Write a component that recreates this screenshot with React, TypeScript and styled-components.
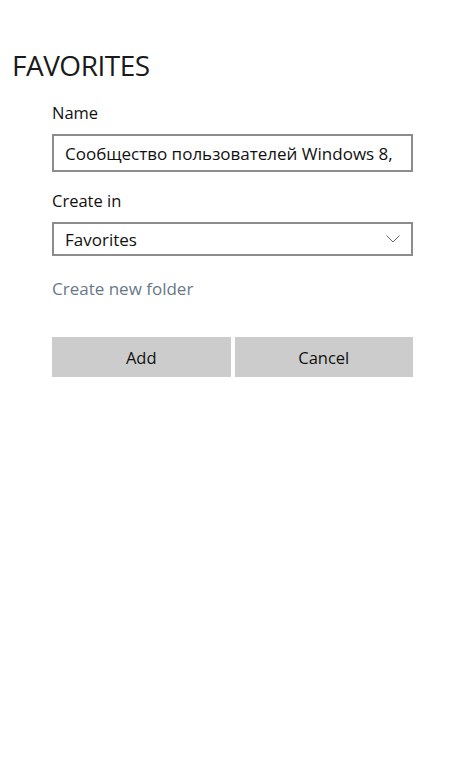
import React from 'react';
import styled, { createGlobalStyle } from 'styled-components';

const GlobalStyle = createGlobalStyle`
  html, body {
    margin: 0;
    padding: 0;
    background: #ffffff;
  }
  body {
    font-family: 'Open Sans', 'Noto Sans', sans-serif;
    color: #000000;
  }
`;

const Screen = styled.div`
  width: 465px;
  min-height: 777px;
  background: #ffffff;
  padding-top: 46px;
  box-sizing: border-box;
`;

const Title = styled.h1`
  margin: 0 0 0 12px;
  font-size: 28px;
  font-weight: 400;
  line-height: 38px;
  letter-spacing: -0.5px;
  color: #1a1a1a;
`;

const Form = styled.div`
  margin: 18px 0 0 52px;
  width: 361px;
  display: flex;
  flex-direction: column;
`;

const Label = styled.div`
  font-size: 16.5px;
  line-height: 22px;
  color: #111111;
  margin-bottom: 10px;
`;

const Field = styled.div<{ $height: number }>`
  height: ${(p) => p.$height}px;
  border: 2px solid #8c8c8c;
  box-sizing: border-box;
  display: flex;
  align-items: center;
  justify-content: space-between;
  padding: 0 11px 0 11px;
  font-size: 17px;
  color: #111111;
  white-space: nowrap;
  overflow: hidden;
  margin-bottom: 18px;
`;

const Link = styled.a`
  font-size: 17px;
  line-height: 22px;
  color: #6a7885;
  text-decoration: none;
  margin-top: 4px;
`;

const Buttons = styled.div`
  display: grid;
  grid-template-columns: 1fr 1fr;
  gap: 4px;
  margin-top: 37px;
`;

const Button = styled.button`
  height: 40px;
  border: none;
  background: #cccccc;
  font-family: inherit;
  font-size: 16.5px;
  color: #111111;
  padding: 0;
`;

const Chevron = () => (
  <svg width="14" height="8" viewBox="0 0 14 8" fill="none">
    <path d="M0.5 0.5 L7 7 L13.5 0.5" stroke="#666" strokeWidth="1" />
  </svg>
);

export default function App() {
  return (
    <Screen>
      <GlobalStyle />
      <Title>FAVORITES</Title>
      <Form>
        <Label>Name</Label>
        <Field $height={38}>Сообщество пользователей Windows 8,</Field>
        <Label>Create in</Label>
        <Field $height={34}>
          <span>Favorites</span>
          <Chevron />
        </Field>
        <Link>Create new folder</Link>
        <Buttons>
          <Button>Add</Button>
          <Button>Cancel</Button>
        </Buttons>
      </Form>
    </Screen>
  );
}
